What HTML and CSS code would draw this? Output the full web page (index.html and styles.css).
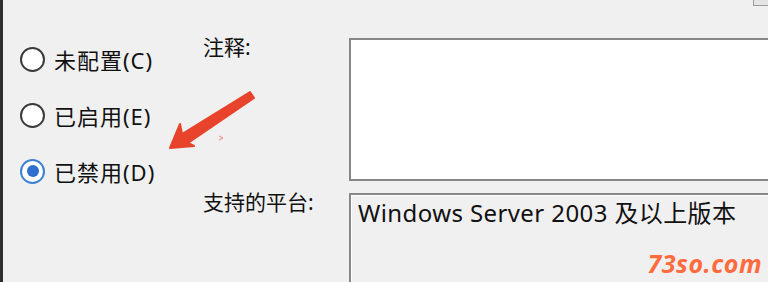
FILE: index.html
```html
<!DOCTYPE html>
<html lang="zh-CN">
<head>
  <meta charset="UTF-8">
  <meta name="viewport" content="width=device-width, initial-scale=1.0">
  <title>组策略设置</title>
  <link rel="stylesheet" href="styles.css">
</head>
<body>

  <div class="dialog">
    <div class="edge"></div>
    <div class="content">
      <div class="topbar">
        <span class="mini-btn"></span>
      </div>

      <div class="main">
        <div class="options">
          <label class="option"><input type="radio" name="state"> 未配置(C)</label>
          <label class="option"><input type="radio" name="state"> 已启用(E)</label>
          <label class="option"><input type="radio" name="state" checked> 已禁用(D)</label>
        </div>

        <div class="fields">
          <div class="field-label">注释:</div>
          <div class="comment-box"></div>
          <div class="field-label">支持的平台:</div>
          <div class="platform-box">Windows Server 2003 及以上版本</div>
        </div>
      </div>

      <!-- red pointer drawn over the screenshot -->
      <svg class="arrow" width="768" height="282" viewBox="0 0 768 282">
        <polygon points="170,148 180,124 182,134 250,92 254,98 188,143 194,146" fill="#e8432b" stroke="#e8432b" stroke-width="2" stroke-linejoin="round"/>
        <polyline points="219,136 223,138 219,140" fill="none" stroke="#f08a7a" stroke-width="1"/>
      </svg>

      <div class="watermark">73so.com</div>
    </div>
  </div>

</body>
</html>
```

FILE: styles.css
```css
body {
  margin: 0;
  width: 768px;
  height: 282px;
  overflow: hidden;
  background-color: #f0f0f0;
  font-family: "Noto Sans", "Noto Sans CJK SC", sans-serif;
  color: #111;
}

.dialog {
  display: flex;
  height: 282px;
}

.edge {
  width: 3px;
  background-color: #2e2e2e;
  flex-shrink: 0;
}

.content {
  flex: 1;
  position: relative;
  min-width: 0;
}

.topbar {
  height: 38px;
  display: flex;
  justify-content: flex-end;
}

.mini-btn {
  width: 16px;
  height: 5px;
  margin-right: -3px;
  border: 1px solid #9c9c9c;
  border-top: none;
  background-color: #e4e4e4;
}

.main {
  display: flex;
}

.options {
  width: 200px;
  flex-shrink: 0;
  box-sizing: border-box;
  padding: 7px 0 0 17px;
  display: flex;
  flex-direction: column;
  gap: 28px;
}

.option {
  display: flex;
  align-items: center;
  gap: 9px;
  height: 28px;
  font-size: 22px;
  letter-spacing: 1px;
}

.option input {
  appearance: none;
  -webkit-appearance: none;
  margin: 0;
  width: 25px;
  height: 25px;
  border: 2px solid #3a3a3a;
  border-radius: 50%;
  background-color: #fff;
  box-sizing: border-box;
  display: grid;
  place-items: center;
}

.option input:checked {
  border-color: #3b7fd6;
}

.option input:checked::before {
  content: "";
  width: 12px;
  height: 12px;
  border-radius: 50%;
  background-color: #2f70cf;
}

.fields {
  flex: 1;
  display: grid;
  grid-template-columns: 146px 440px;
  row-gap: 12px;
}

.field-label {
  font-size: 21px;
  line-height: 26px;
  margin-top: -4px;
}

.comment-box {
  height: 143px;
  box-sizing: border-box;
  border: 2px solid #868686;
  background-color: #fff;
}

.platform-box {
  height: 100px;
  box-sizing: border-box;
  border: 2px solid #868686;
  box-shadow: inset 1px 1px 0 #fff;
  background-color: #f0f0f0;
  padding: 3px 7px;
  font-size: 24px;
  line-height: 30px;
  letter-spacing: 0.4px;
  white-space: nowrap;
}

.arrow {
  position: absolute;
  left: -3px;
  top: 0;
  pointer-events: none;
}

.watermark {
  position: absolute;
  right: 6px;
  bottom: 2px;
  font-family: "Open Sans", "DejaVu Sans", sans-serif;
  font-size: 25px;
  font-weight: 700;
  font-style: italic;
  color: #ff6b3d;
  letter-spacing: 0.5px;
}
```
